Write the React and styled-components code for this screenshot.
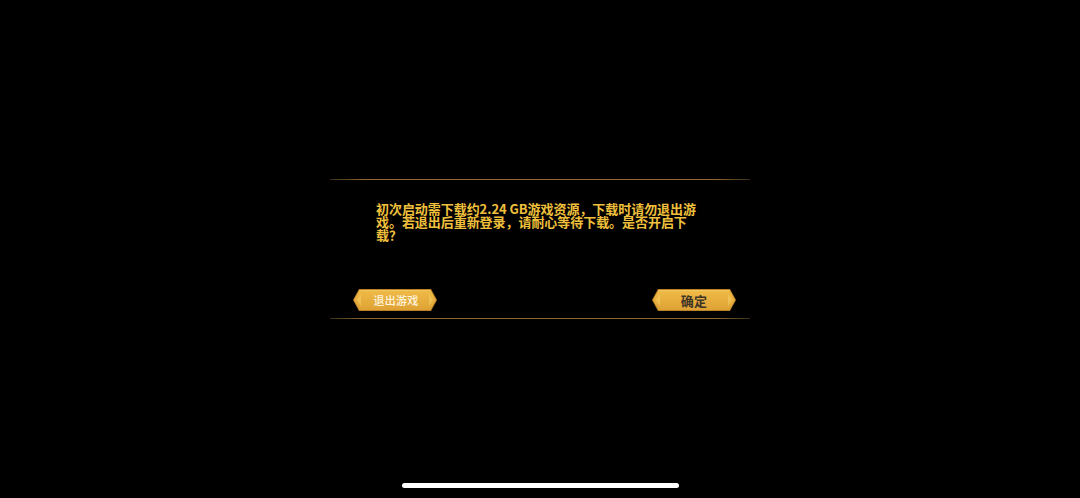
import React from 'react';
import styled, { createGlobalStyle } from 'styled-components';

const GlobalStyle = createGlobalStyle`
  html, body {
    margin: 0;
    padding: 0;
    background: #000;
  }
  body {
    font-family: 'Noto Sans CJK SC', 'Noto Sans', sans-serif;
  }
`

const Screen = styled.div`
  position: relative;
  width: 1080px;
  height: 498px;
  background: #000;
  display: flex;
  align-items: center;
  justify-content: center;
  overflow: hidden;
`

const Dialog = styled.div`
  width: 420px;
  display: flex;
  flex-direction: column;
`

const Rule = styled.div`
  height: 1px;
  background: linear-gradient(to right, rgba(140,104,52,0.4), #8c6834 8%, #8c6834 92%, rgba(140,104,52,0.4));
`

const Body = styled.div`
  height: 138px;
  display: flex;
  flex-direction: column;
  justify-content: space-between;
  padding: 22px 14px 7px 23px;
  box-sizing: border-box;
`

const Message = styled.p`
  margin: 0 0 0 23px;
  width: 330px;
  font-size: 13px;
  line-height: 13px;
  font-weight: 700;
  color: #f0c03c;
  letter-spacing: -0.05px;
`

const Actions = styled.div`
  display: flex;
  justify-content: space-between;
  align-items: center;
`

const BtnWrap = styled.button`
  position: relative;
  width: 84px;
  height: 22px;
  padding: 0;
  border: none;
  background: none;
  display: flex;
  align-items: center;
  justify-content: center;
  cursor: pointer;
  font-family: 'Noto Sans CJK SC', sans-serif;
  svg {
    position: absolute;
    left: 0;
    top: 0;
  }
`

const BtnLabel = styled.span`
  position: relative;
  font-size: ${p => p.dark ? '13px' : '11px'};
  font-weight: ${p => p.dark ? 700 : 500};
  color: ${p => p.dark ? '#3e3526' : '#fff6e0'};
  line-height: 1;
  letter-spacing: 0.2px;
  margin-left: ${p => p.dark ? '0' : '2px'};
`

const HomeBar = styled.div`
  position: absolute;
  left: 402px;
  bottom: 10px;
  width: 277px;
  height: 5px;
  border-radius: 3px;
  background: #fff;
`

function Plate() {
  return (
    <svg width="84" height="22" viewBox="0 0 84 22">
      <defs>
        <linearGradient id="plateFill" x1="0" y1="0" x2="0" y2="1">
          <stop offset="0" stopColor="#f0bb48" />
          <stop offset="1" stopColor="#dea234" />
        </linearGradient>
      </defs>
      <polygon points="6,0 78,0 84,11 78,22 6,22 0,11" fill="#b98124" />
      <polygon points="6.5,1 77.5,1 83,11 77.5,21 6.5,21 1,11" fill="url(#plateFill)" />
      <polygon points="4,11 8,5 8,17" fill="#f4c860" opacity="0.7" />
      <polygon points="80,11 76,5 76,17" fill="#f4c860" opacity="0.7" />
      <line x1="7" y1="1.5" x2="77" y2="1.5" stroke="#f6d070" strokeWidth="1" opacity="0.6" />
    </svg>
  )
}

function Button({ label, dark }) {
  return (
    <BtnWrap>
      <Plate />
      <BtnLabel dark={dark}>{label}</BtnLabel>
    </BtnWrap>
  )
}

export default function App() {
  return (
    <Screen>
      <GlobalStyle />
      <Dialog>
        <Rule />
        <Body>
          <Message>
            初次启动需下载约2.24 GB游戏资源，下载时请勿退出游戏。若退出后重新登录，请耐心等待下载。是否开启下载？
          </Message>
          <Actions>
            <Button label="退出游戏" />
            <Button label="确定" dark />
          </Actions>
        </Body>
        <Rule />
      </Dialog>
      <HomeBar />
    </Screen>
  )
}
